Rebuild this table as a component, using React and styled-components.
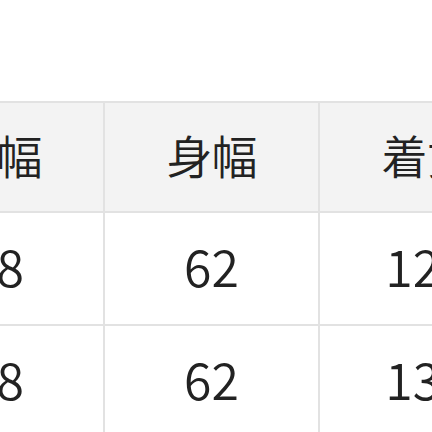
import styled, { createGlobalStyle } from 'styled-components';

const GlobalStyle = createGlobalStyle`
  html, body {
    margin: 0;
    padding: 0;
    background: #ffffff;
  }
  body {
    width: 432px;
    height: 432px;
    overflow: hidden;
    font-family: "Noto Sans CJK JP", "Noto Sans", sans-serif;
  }
`;

const Viewport = styled.div`
  width: 432px;
  height: 432px;
  overflow: hidden;
  padding-top: 101px;
  box-sizing: border-box;
`;

const SizeGrid = styled.div`
  display: grid;
  grid-template-columns: repeat(3, 213px);
  grid-auto-rows: 111px;
  grid-template-rows: 108px;
  gap: 2px;
  padding: 2px 2px 2px 0;
  margin-left: -110px;
  width: max-content;
  background: #e2e2e2;
`;

const Cell = styled.div`
  display: flex;
  align-items: center;
  justify-content: center;
  box-sizing: border-box;
  padding-bottom: ${p => (p.$head ? '6px' : '8px')};
  background: ${p => (p.$head ? '#f3f3f3' : '#ffffff')};
  color: #222222;
  font-size: ${p => (p.$head ? '46px' : '50px')};
  font-weight: 350;
  line-height: 1;
  letter-spacing: ${p => (p.$head ? '-1px' : '0')};
`;

const headers = ['肩幅', '身幅', '着丈'];
const rows = [
  ['48', '62', '125'],
  ['48', '62', '132'],
];

export default function App() {
  return (
    <>
      <GlobalStyle />
      <Viewport>
        <SizeGrid>
          {headers.map(h => (
            <Cell key={h} $head>
              {h}
            </Cell>
          ))}
          {rows.map((r, i) =>
            r.map((v, j) => <Cell key={`${i}-${j}`}>{v}</Cell>)
          )}
        </SizeGrid>
      </Viewport>
    </>
  );
}
